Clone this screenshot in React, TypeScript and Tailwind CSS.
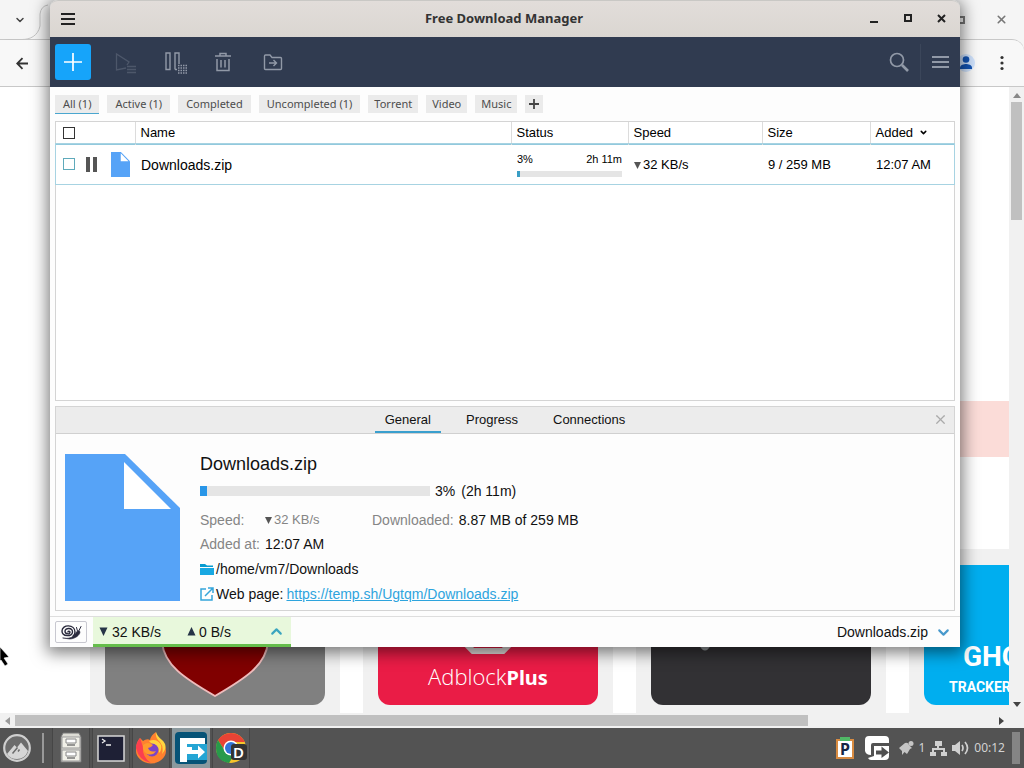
import React from "react";
import { ChevronDown, ChevronUp, X } from "lucide-react";

const sans = "font-['Liberation_Sans',Arial,sans-serif]";
const noto = "font-['Noto_Sans',sans-serif]";

function TabStrip() {
  return (
    <header className="shrink-0 bg-[#f5f5f5]">
      <div className="flex h-[39px] items-center justify-between pl-3.5 pr-4">
        <div className="flex h-10 items-center">
          <button aria-label="Search tabs" className="text-[#444]">
            <ChevronDown size={12} strokeWidth={3} />
          </button>
        </div>
        <svg className="mr-auto ml-[-26px] h-10 w-12" viewBox="0 0 48 40" fill="none" stroke="#c4c4c4">
          <path d="M0 44Q2 39.500 10 39.500H22C30 39.500 38 36 40 26V14Q41 6 48 5" />
        </svg>
        <div className="flex items-center gap-7 text-[#777]">
          <svg width="10" height="10" viewBox="0 0 10 10" fill="none" stroke="currentColor" strokeWidth="2">
            <rect x="1" y="2" width="6" height="6" />
          </svg>
          <button aria-label="Close browser">
            <X size={13} strokeWidth={3} />
          </button>
        </div>
      </div>
      <div className="flex h-12 items-center justify-between border-b border-[#c8c8c8] rounded-tr-xl border-t bg-[#f8f8f8] pl-4 pr-4">
        <button aria-label="Back">
          <svg width="13" height="13" viewBox="0 0 13 13" fill="none" stroke="#333" strokeWidth="1.8">
            <path d="M12 6.500H1.500M6.500 1.200L1.200 6.500L6.500 11.800" />
          </svg>
        </button>
        <div className="flex items-center gap-5">
          <svg width="20" height="20" viewBox="0 0 20 20">
            <circle cx="10" cy="10" r="9" fill="#cfe2fc" />
            <circle cx="10" cy="6.500" r="3.300" fill="#1455b5" />
            <path d="M4 16v-1.500C4 12 8 11 10 11s6 1 6 3.500V16z" fill="#1455b5" />
          </svg>
          <button aria-label="Browser menu">
            <svg width="12" height="16" viewBox="0 0 12 16" fill="#333">
              <circle cx="6" cy="2.500" r="1.600" />
              <circle cx="6" cy="8" r="1.600" />
              <circle cx="6" cy="13.500" r="1.600" />
            </svg>
          </button>
        </div>
      </div>
    </header>
  );
}

function Panel({ children }: { children: React.ReactNode }) {
  return <div className="w-[250px] shrink-0 bg-[#f1f1f1] px-[15px] pt-4 pb-2">{children}</div>;
}

function BrowserPage() {
  return (
    <div className="flex min-h-0 flex-1 flex-col">
      <div className="flex min-h-0 flex-1">
        <main className="flex min-w-0 flex-1 flex-col justify-end overflow-hidden bg-white">
          <div className="mb-[92px] ml-[90px] h-14 shrink-0 bg-[#fbdcd8]" />
          <div className="ml-[90px] flex shrink-0 gap-[23px]">
            <Panel>
              <div className="flex h-[140px] items-end justify-center overflow-hidden rounded-xl bg-[#808080] pb-2">
                <svg width="110" height="130" viewBox="0 0 110 130">
                  <path d="M55 1L108 20V75C106 98 86 111 55 129C24 111 4 98 2 75V20Z" fill="#800000" stroke="#eebcbc" strokeWidth="2" />
                </svg>
              </div>
            </Panel>
            <Panel>
              <div className="flex h-[140px] flex-col items-center justify-end rounded-xl bg-[#ea1c46] pb-[11px] text-white">
                <svg className="mb-1.5" width="84" height="84" viewBox="0 0 84 84">
                  <path d="M27 3H57L81 27V57L57 81H27L3 57V27Z" fill="#e21b40" stroke="#e0dad8" strokeWidth="6" />
                </svg>
                <div className="font-['Open_Sans',sans-serif] text-[22px] leading-8 font-light">
                  Adblock<span className="font-['Noto_Sans',sans-serif] text-[20px] font-bold">Plus</span>
                </div>
              </div>
            </Panel>
            <Panel>
              <div className="flex h-[140px] rounded-xl bg-[#323134]">
                <svg width="110" height="90" viewBox="0 0 110 90">
                  <path d="M30 10L48 80Q54 91 60 80L78 10Z" fill="#8f9496" />
                </svg>
              </div>
            </Panel>
            <Panel>
              <div className="flex h-[140px] flex-col justify-end rounded-xl bg-[#00aeef] pb-1.5 pl-[25px] font-['Roboto',sans-serif] font-bold text-white">
                <div className="pl-3.5 text-[28px] leading-9">GHO</div>
                <div className="text-sm leading-6 whitespace-nowrap">TRACKER</div>
              </div>
            </Panel>
          </div>
        </main>
        <div className="flex w-[15px] shrink-0 flex-col items-center bg-[#f1f1f1] py-1.5">
          <svg width="8" height="5" viewBox="0 0 8 5" fill="#888"><path d="M4 0L8 5H0Z" /></svg>
          <div className="mt-1 h-[118px] w-[11px] bg-[#c0c0c0]" />
          <svg className="mt-auto" width="8" height="5" viewBox="0 0 8 5" fill="#444"><path d="M4 5L8 0H0Z" /></svg>
        </div>
      </div>
      <div className="flex h-[15px] shrink-0 items-center bg-[#f1f1f1] pl-[5px]">
        <svg width="5" height="8" viewBox="0 0 5 8" fill="#999"><path d="M0 4L5 0V8Z" /></svg>
        <div className="ml-[5px] h-[11px] w-7/9 bg-[#c0c0c0]" />
        <svg className="mr-5 ml-auto" width="5" height="8" viewBox="0 0 5 8" fill="#444"><path d="M5 4L0 0V8Z" /></svg>
      </div>
    </div>
  );
}

function TitleBar() {
  return (
    <div className="flex h-[37px] shrink-0 items-center rounded-t-lg border-t border-[#c9c8c5] bg-linear-to-b from-[#e2ddda] to-[#dad6d1] pr-[13px] pl-[11px] text-[#222]">
      <button aria-label="Window menu">
        <svg width="14" height="12" viewBox="0 0 14 12" stroke="currentColor" strokeWidth="2"><path d="M0 1H14M0 6H14M0 11H14" /></svg>
      </button>
      <h1 className={`flex-1 pl-16 text-center text-[13px] font-bold text-[#333] ${noto}`}>Free Download Manager</h1>
      <div className="flex items-center gap-6">
        <button aria-label="Minimize">
          <svg width="10" height="10" viewBox="0 0 10 10" stroke="currentColor" strokeWidth="2"><path d="M1 8H9" /></svg>
        </button>
        <button aria-label="Maximize">
          <svg width="10" height="10" viewBox="0 0 10 10" fill="none" stroke="currentColor" strokeWidth="2"><rect x="2" y="1" width="6" height="6" /></svg>
        </button>
        <button aria-label="Close">
          <svg width="10" height="10" viewBox="0 0 10 10" stroke="currentColor" strokeWidth="2"><path d="M1 1L8 8M8 1L1 8" /></svg>
        </button>
      </div>
    </div>
  );
}

function Toolbar() {
  return (
    <div className="flex h-[50px] shrink-0 items-center bg-[#303b50] pr-[11px] pl-[5px] text-[#9199a7]">
      <button aria-label="Add download" className="flex size-9 items-center justify-center rounded-[3px] bg-[#16a4fa] text-white">
        <svg width="18" height="18" viewBox="0 0 18 18" stroke="currentColor" strokeWidth="1.700"><path d="M0 9H18M9 0V18" /></svg>
      </button>
      <div className="ml-6 flex items-center gap-[26px]">
        <button aria-label="Start" className="text-[#4d576a]">
          <svg width="22" height="24" viewBox="0 0 22 24" fill="none" stroke="currentColor" strokeWidth="1.300">
            <path d="M11 18L1.500 20V4L14 12L12 15M12 16.500H21M12 19.500H21M12 22.500H21" />
          </svg>
        </button>
        <button aria-label="Pause">
          <svg width="24" height="24" viewBox="0 0 24 24" fill="none" stroke="currentColor" strokeWidth="1.400">
            <path d="M3 3H7V19.500H3ZM12 19.500V3H16V14M12 19.500H14" />
            <path d="M15 15.500H24M15 18H24M15 20.500H24M15 23H24" strokeWidth="1.500" strokeDasharray="1.500 1" />
          </svg>
        </button>
        <button aria-label="Delete">
          <svg width="20" height="24" viewBox="0 0 20 24" fill="none" stroke="currentColor" strokeWidth="1.500">
            <path d="M2 6H18M7 6V3.500H13V6M4 9V20.500H16V9M8 10V17.500M12 10V17.500" />
          </svg>
        </button>
        <button aria-label="Move to folder" className="ml-1">
          <svg width="20" height="24" viewBox="0 0 20 24" fill="none" stroke="currentColor" strokeWidth="1.400">
            <path d="M2.500 5H7L9 7.500H17.500Q18.500 7.500 18.500 8.500V18.500Q18.500 19.500 17.500 19.500H2.500Q1.500 19.500 1.500 18.500V6Q1.500 5 2.500 5ZM6 13H13.500M10.500 10L13.500 13L10.500 16" />
          </svg>
        </button>
      </div>
      <button aria-label="Search" className="ml-auto">
        <svg width="20" height="20" viewBox="0 0 20 20" fill="none" stroke="currentColor">
          <circle cx="8" cy="8" r="6.500" strokeWidth="1.700" /><path d="M13 13L19 19" strokeWidth="2.600" />
        </svg>
      </button>
      <div className="mx-[11px] h-9 w-px bg-[#3b465a]" />
      <button aria-label="Menu">
        <svg width="17" height="14" viewBox="0 0 17 14" stroke="currentColor" strokeWidth="2"><path d="M0 2H17M0 7H17M0 12H17" /></svg>
      </button>
    </div>
  );
}

function Filters() {
  const states = ["Active (1)", "Completed", "Uncompleted (1)"];
  const kinds = ["Torrent", "Video", "Music"];
  return (
    <nav className={`flex h-[34px] shrink-0 items-center gap-2 px-[5px] text-[11px] text-[#4d4d4d] ${noto}`}>
      <button className="h-[19px] border-b border-[#4aa6cf] bg-[#ebebeb] px-2 leading-[18px]">All (1)</button>
      {states.map((f) => (
        <button key={f} className="h-[18px] bg-[#ebebeb] px-2 leading-[18px]">{f}</button>
      ))}
      {kinds.map((f) => (
        <button key={f} className="h-[18px] bg-[#ebebeb] px-1.5 leading-[18px]">{f}</button>
      ))}
      <button aria-label="Add filter" className="flex size-[18px] items-center justify-center bg-[#ebebeb]">
        <svg width="10" height="10" viewBox="0 0 10 10" stroke="#444" strokeWidth="1.800"><path d="M0 5H10M5 0V10" /></svg>
      </button>
    </nav>
  );
}

function FileShape({ className }: { className: string }) {
  return (
    <svg className={className} viewBox="0 0 115 147" preserveAspectRatio="none">
      <path d="M0 0H60L115 54V147H0Z" fill="#56a3f7" />
      <path d="M59 8V55H106Z" fill="white" />
    </svg>
  );
}

function Downloads() {
  const th = "border-l border-[#dcdcdc] px-[5px] text-left font-normal";
  return (
    <div className="mx-[5px] min-h-0 flex-1 border border-[#d4d4d4] bg-white">
      <table className="w-full table-fixed border-collapse text-[13px] text-black">
        <colgroup>
          <col className="w-[79px]" /><col /><col className="w-[117px]" /><col className="w-[134px]" /><col className="w-[108px]" /><col className="w-[84px]" />
        </colgroup>
        <thead>
          <tr className="h-[22px]">
            <th className="pl-[7px] text-left">
              <input type="checkbox" aria-label="Select all" className="block size-3 appearance-none border border-[#333] bg-white" />
            </th>
            <th className={th}>Name</th>
            <th className={th}>Status</th>
            <th className={th}>Speed</th>
            <th className={th}>Size</th>
            <th className={th}>
              <span className="flex items-center gap-1.5">Added <ChevronDown size={9} strokeWidth={4} /></span>
            </th>
          </tr>
        </thead>
        <tbody>
          <tr className="h-10 border-y border-[#92c9dd] outline outline-[#a7d3e2]">
            <td className="pl-[7px]">
              <div className="flex items-center">
                <input type="checkbox" aria-label="Select Downloads.zip" className="size-3 appearance-none border border-[#5faabb] bg-white" />
                <button aria-label="Pause Downloads.zip" className="ml-[11px]">
                  <svg width="11" height="15" viewBox="0 0 11 15" fill="#555"><path d="M0 0H4V15H0ZM7 0H11V15H7Z" /></svg>
                </button>
                <FileShape className="ml-3.5 h-[25px] w-[19px]" />
              </div>
            </td>
            <td className="px-1.5 pt-0.5 text-sm">Downloads.zip</td>
            <td className="px-1.5 pt-1.5">
              <div className="flex justify-between text-[11px] leading-3"><span>3%</span><span>2h 11m</span></div>
              <div className="mt-1.5 mb-1 h-1.5 bg-[#e5e5e5]"><div className="h-full w-[3%] bg-[#3a9ec5]" /></div>
            </td>
            <td className="px-1.5 pt-0.5">
              <span className="flex items-center gap-0.5">
                <svg width="7" height="7" viewBox="0 0 7 7" fill="#555"><path d="M0 0H7L3.500 7Z" /></svg>32 KB/s
              </span>
            </td>
            <td className="px-1.5 pt-0.5">9 / 259 MB</td>
            <td className="px-1.5 pt-0.5">12:07 AM</td>
          </tr>
        </tbody>
      </table>
    </div>
  );
}

function Details() {
  return (
    <section className="mx-[5px] mt-[5px] flex h-[205px] shrink-0 flex-col border border-[#d4d4d4] bg-[#fdfdfd]">
      <div className="flex h-[27px] shrink-0 items-start border-b border-[#d0d0d0] bg-[#ececec] text-[13px] text-[#111]">
        <div className="flex flex-1 justify-center gap-[15px] pl-[21px]">
          <button className="h-[26px] border-b-2 border-[#3a9fce] px-2.5 pt-0.5">General</button>
          <button className="h-[26px] px-2.5">Progress</button>
          <button className="h-[26px] px-2.5">Connections</button>
        </div>
        <button aria-label="Close details" className="mt-[5px] mr-1.5 text-[#aaa]"><X size={15} /></button>
      </div>
      <div className="flex gap-5 px-[9px] pt-5">
        <FileShape className="h-[147px] w-[115px] shrink-0" />
        <div className="min-w-0 flex-1 text-sm text-[#111]">
          <h2 className="text-lg leading-5">Downloads.zip</h2>
          <div className="mt-2 flex h-[18px] items-center">
            <div className="h-2.5 w-[230px] bg-[#e5e5e5]"><div className="h-full w-[3%] bg-[#2996e8]" /></div>
            <span className="ml-[5px]">3%</span><span className="ml-1.5">(2h 11m)</span>
          </div>
          <div className="mt-2 flex h-6 items-center">
            <span className="w-[65px] text-[#858585]">Speed:</span>
            <span className="flex w-[107px] items-center gap-0.5 text-[13px] text-[#858585]">
              <svg width="7" height="7" viewBox="0 0 7 7" fill="#555"><path d="M0 0H7L3.500 7Z" /></svg>32 KB/s
            </span>
            <span className="text-[#858585]">Downloaded:</span><span className="ml-[5px]">8.87 MB of 259 MB</span>
          </div>
          <div className="flex h-6 items-center"><span className="w-[65px] text-[#858585]">Added at:</span><span>12:07 AM</span></div>
          <div className="flex h-[25px] items-center gap-0.5">
            <svg width="14" height="12" viewBox="0 0 14 12"><path d="M0 1H5L7 2.500H13V4H0Z" fill="#079bd0" /><path d="M0 5H14V12H0Z" fill="#18a8e2" /></svg>
            <span>/home/vm7/Downloads</span>
          </div>
          <div className="flex h-[25px] items-center">
            <svg width="14" height="14" viewBox="0 0 14 14" fill="none" stroke="#35a5da" strokeWidth="1.500"><path d="M6 2H1V13H12V8M5 9L13 1M8 1H13V6" /></svg>
            <span className="ml-0.5">Web page:</span>
            <a href="https://temp.sh/Ugtqm/Downloads.zip" className="ml-[3px] text-[#2ea4dd] underline">https://temp.sh/Ugtqm/Downloads.zip</a>
          </div>
        </div>
      </div>
    </section>
  );
}

function StatusBar() {
  return (
    <footer className="mt-[5px] flex h-[31px] shrink-0 items-center border-t border-[#dedede] pl-[5px] text-sm text-[#111]">
      <button aria-label="Snail mode" className="flex h-[22px] w-8 items-center justify-center rounded-xs border border-[#c8c8d0]">
        <svg width="22" height="16" viewBox="0 0 22 16" fill="none" stroke="#29293c" strokeWidth="1.400" strokeLinecap="round">
          <path d="M8 8C8 6.800 10 7 10 8.300C10 10.500 5 10.500 5 7.200C5 3.500 12.500 3.500 12.500 8C12.500 13 2 13 2 7C2 0 15 0 15 8C15 9.500 14.500 11 13 12" />
          <path d="M3 14C8 15 13 14 15.500 9.500C16.500 7 19.500 5.500 20 8C20 11 15 15 10 15Z" fill="#29293c" strokeWidth=".6" />
          <path d="M17.500 7L16.500 3.500M19 6.500L21 2.500" strokeWidth="1" />
        </svg>
      </button>
      <div className="ml-1.5 flex h-[30px] w-[198px] items-center border-b-[3px] border-[#65bd4b] bg-[#e8f8dc] pt-0.5 pl-1.5">
        <svg width="9" height="9" viewBox="0 0 9 9" fill="#263447"><path d="M.5 .5H8.500L4.500 9Z" /></svg>
        <span className="ml-1">32 KB/s</span>
        <svg className="ml-[26px]" width="9" height="9" viewBox="0 0 9 9" fill="#263447"><path d="M.5 8.500H8.500L4.500 0Z" /></svg>
        <span className="ml-[3px]">0 B/s</span>
        <button aria-label="Speed limits" className="mr-1.5 ml-auto text-[#3ba5bf]"><ChevronUp size={17} strokeWidth={3} /></button>
      </div>
      <button className="mr-2 ml-auto flex items-center gap-[7px]">Downloads.zip <ChevronDown className="text-[#4899cc]" size={17} strokeWidth={3} /></button>
    </footer>
  );
}

function Taskbar() {
  const app = "flex h-10 w-[38px] items-center justify-center border-x border-[#464646] bg-[#5a5a5a]";
  return (
    <div className="flex h-10 shrink-0 items-center bg-[#535353] text-[#d2d2d2]">
      <button aria-label="Start menu" className="ml-[3px]">
        <svg width="28" height="28" viewBox="0 0 28 28">
          <circle cx="14" cy="14" r="12.800" fill="#6c6c6c" stroke="#cfcfcf" strokeWidth="2.200" />
          <path d="M4 20L11.500 11L14 13.500L18 8.500L25 17Q22 25 14 25Q7 25 4 20Z" fill="#d6d6d6" />
          <path d="M9.500 19.500L14.500 13.500M15 17.500L16.500 15.500" stroke="#6c6c6c" strokeWidth="1.500" />
        </svg>
      </button>
      <div className="mr-2 ml-[11px] h-[30px] w-0.5 bg-[#999]" />
      <div className="flex gap-0.5">
        <button aria-label="Files" className={app}>
          <svg width="24" height="32" viewBox="0 0 24 32"><path d="M4 1H20L22 5V30H2V5Z" fill="#dddcd5" stroke="#777" /><path d="M3 5H21V16H3ZM3 18H21V29H3Z" fill="#f1f0e8" stroke="#999" /><path d="M7 7H17V11H7ZM7 20H17V24H7Z" fill="#fff" stroke="#888" /><path d="M8 13H16M8 26H16" stroke="#777" strokeWidth="1.500" /></svg>
        </button>
        <button aria-label="Terminal" className={app}>
          <svg width="28" height="28" viewBox="0 0 28 28"><rect x="1" y="2" width="26" height="25" fill="#1e2035" stroke="#d7d7d7" strokeWidth="1.500" /><path d="M5 5L8 7L5 9M9 11H14" fill="none" stroke="#eee" strokeWidth="1.300" /></svg>
        </button>
        <button aria-label="Firefox" className={app}>
          <svg width="32" height="32" viewBox="0 0 32 32">
            <path d="M5 6L8 9Q12 6 15 8Q16 3 21 0Q21 4 26 8Q31 13 31 19A15 13 0 0 1 1 18Q1 10 5 6Z" fill="#ff802f" />
            <path d="M21 0Q20 6 25 10Q29 15 27 22Q34 14 27 8Q22 4 21 0ZM14 9Q22 6 26 13Q27 18 24 21Q24 13 17 12Z" fill="#ffd43e" />
            <path d="M1 16Q4 29 16 31Q7 25 8 15L5 6Q1 11 1 16Z" fill="#fb3f4f" />
            <circle cx="17" cy="18" r="6.500" fill="#7c45c8" />
            <path d="M8 13Q13 9 18 13Q16 16 13 16Q15 21 21 19Q18 24 12 22Q7 19 8 13Z" fill="#ff9a2c" />
          </svg>
        </button>
        <button aria-label="Free Download Manager" className="flex h-10 w-[38px] items-center justify-center bg-[#8b999e]">
          <svg width="32" height="32" viewBox="0 0 32 32">
            <rect width="32" height="32" rx="4" fill="#065377" />
            <path d="M12 12H32V28H12Z" fill="#24a5d4" />
            <path d="M5 6H30V12H12V15H17V22H12V30H5Z" fill="white" />
            <path d="M17 18H23V13.500L30 20L23 26.500V22H17Z" fill="white" />
          </svg>
        </button>
        <button aria-label="Chrome" className={app}>
          <svg width="32" height="32" viewBox="0 0 32 32"><circle cx="16" cy="16" r="15" fill="#f6c52c" /><path d="M3 8Q8 1 16 1Q25 1 30 10H16L10 19Z" fill="#e84335" /><path d="M3 8L10 19L19 23L14 31Q1 29 1 16Q1 11 3 8Z" fill="#289a4b" /><circle cx="16" cy="16" r="7.500" fill="white" /><circle cx="16" cy="16" r="6" fill="#3274d9" /><rect x="16" y="12" width="16" height="16" rx="3" fill="#333" /><text x="18" y="26" fill="white" fontSize="15" fontFamily="Noto Sans" fontWeight="600">D</text></svg>
        </button>
      </div>
      <div className={`ml-auto flex items-center text-xs ${noto}`}>
        <svg className="mr-[9px]" width="20" height="24" viewBox="0 0 20 24"><rect x="1" y="3" width="18" height="20" fill="#d88b41" /><rect x="3" y="5" width="14" height="16" fill="#fff" /><path d="M5 1H15V5H5Z" fill="#50b966" /><text x="5" y="19" fill="#172544" fontSize="16" fontFamily="Noto Sans" fontWeight="700">P</text></svg>
        <svg className="mr-2" width="26" height="26" viewBox="0 0 26 26">
          <path d="M5 1H21Q25 1 25 5V8H9Q7 8 7 10V20Q2 20 1 16V5Q1 1 5 1Z" fill="white" />
          <path d="M10 11H25V21Q25 25 21 25H7Q5 25 4 23L10 21Z" fill="white" />
          <path d="M12 15.500H17.500V11.500L25 17.500L17.500 23V19.500H12Z" fill="#505050" />
        </svg>
        <svg className="mr-1" width="16" height="16" viewBox="0 0 16 16" fill="#c5c5c5"><path d="M1 8L7 3Q10 2 11 5L14 8L12 9L9 14L6.500 12L4 15L4 11Z" /><circle cx="13" cy="3.500" r="2.500" /></svg>
        <span className="mr-[5px]">1</span>
        <svg className="mr-[5px]" width="17" height="17" viewBox="0 0 17 17" fill="#d0d0d0"><path d="M5 1H12V6H9V8H15V12H17V16H11V12H13V10H4V12H6V16H0V12H2V8H7V6H5Z" /></svg>
        <svg className="mr-[5px]" width="17" height="16" viewBox="0 0 17 16" fill="none" stroke="#d0d0d0" strokeWidth="1.700"><path d="M0 5H3L8 1V15L3 11H0Z" fill="#d0d0d0" stroke="none" /><path d="M10 5Q12 8 10 11M13 2Q18 8 13 14" /></svg>
        <time className="mr-[7px]">00:12</time>
        <div className="mr-1 h-[32px] w-2 bg-[#858585]" />
      </div>
    </div>
  );
}

export default function App() {
  return (
    <div className={`relative flex h-screen flex-col overflow-hidden bg-white ${sans}`}>
      <TabStrip />
      <BrowserPage />
      <Taskbar />
      <div className="absolute top-0 right-16 bottom-[121px] left-[50px] flex flex-col rounded-t-lg bg-[#fdfdfd] shadow-[0_3px_16px_3px_rgba(0,0,0,0.5)]">
        <TitleBar />
        <Toolbar />
        <Filters />
        <Downloads />
        <Details />
        <StatusBar />
      </div>
      <svg className="absolute top-[646px] left-0" width="10" height="20" viewBox="0 0 10 20"><path d="M0 1L9 11L4 12L8 18L5 20L1 14L0 15Z" fill="black" stroke="white" strokeWidth=".6" /></svg>
    </div>
  );
}
